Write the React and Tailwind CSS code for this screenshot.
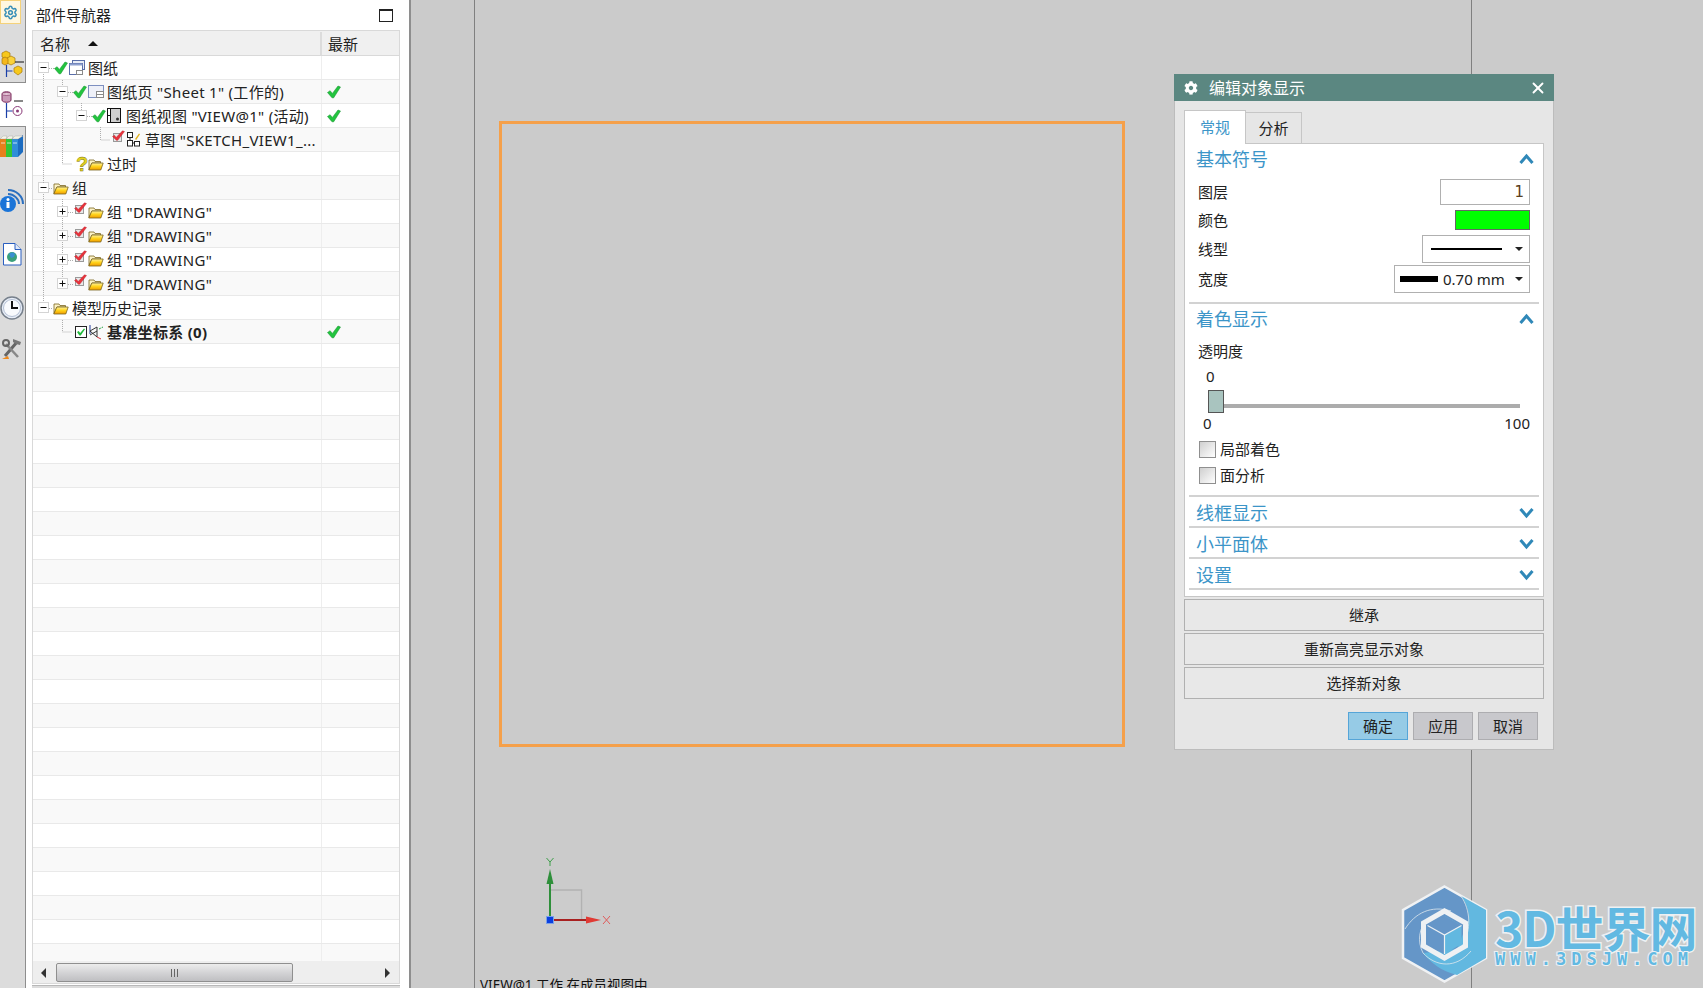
import { FaCog } from 'react-icons/fa';
import { Settings, X } from 'lucide-react';

const Expander = ({ open, tight }) => (
  <svg width="11" height="11" viewBox="0 0 11 11" className={`relative shrink-0 ${tight ? 'mr-[4px]' : 'mr-[6px]'}`}>
    <rect x="0.5" y="0.5" width="10" height="10" fill="#fff" stroke="#d4d4d4" />
    <path d="M2.5 5.5h6" stroke="#111" />
    {!open && <path d="M5.5 2.5v6" stroke="#111" />}
  </svg>
);

const GreenCheck = () => (
  <svg width="14" height="14" viewBox="0 0 14 14" className="-ml-px mr-px shrink-0">
    <path d="M0.500 7.500l2.600-1.800 2.300 2.700L11 1l2.500 1-6.800 10.800H5z" fill="#22c43e" stroke="#0e8f28" strokeWidth="0.5" />
  </svg>
);

const RedCheck = () => (
  <svg width="14" height="14" viewBox="0 0 14 14" className="shrink-0 -mt-[5px]">
    <rect x="1.5" y="3.5" width="8" height="8" fill="#e8e8e8" stroke="#9a9a9a" />
    <path d="M0.5 6.5l2-1.2 1.6 2.2L10.5 0.8l2 .7-6.8 8.8H4.4z" fill="#e8333c" stroke="#b01a24" strokeWidth="0.4" />
  </svg>
);

const Question = () => (
  <span className="w-[14px] shrink-0 pl-[2px] font-['Liberation_Sans',sans-serif] text-[20px] leading-none font-bold text-[#e4d420] [-webkit-text-stroke:0.4px_#77700f]">?</span>
);

const CheckedBox = () => (
  <svg width="14" height="14" viewBox="0 0 14 14" className="shrink-0">
    <rect x="1.5" y="1.5" width="11" height="11" fill="#fff" stroke="#222" />
    <path d="M3 7l1.700-1 1.500 2L10 3.600l1 .6-4.300 6.200H5.400z" fill="#1fbb3a" />
  </svg>
);

const Folder = () => (
  <svg width="16" height="14" viewBox="0 0 16 14" className="mr-[3px] shrink-0">
    <defs>
      <linearGradient id="folderFront" x1="0" y1="0" x2="0" y2="1">
        <stop offset="0" stopColor="#fff3a0" />
        <stop offset="0.5" stopColor="#ffd21a" />
        <stop offset="1" stopColor="#f09a00" />
      </linearGradient>
    </defs>
    <path d="M1 3h5l1 1.500h5.500V6H4L1 12.500z" fill="#fdf3c8" stroke="#7a6420" strokeWidth="0.8" />
    <path d="M3.800 6h11.400l-2.400 7H0.800z" fill="url(#folderFront)" stroke="#7a6420" strokeWidth="0.8" />
  </svg>
);

const SheetsIcon = () => (
  <svg width="16" height="15" viewBox="0 0 16 15" className="mr-[3px] shrink-0">
    <rect x="3.5" y="0.5" width="12" height="9" fill="#e9edf7" stroke="#5a6ea8" />
    <rect x="0.5" y="3.5" width="13" height="11" fill="#fff" stroke="#5a6ea8" />
    <rect x="0.5" y="3.5" width="13" height="2" fill="#8ea0cf" />
    <rect x="7.5" y="10.5" width="6" height="4" fill="#fff" stroke="#8a8a8a" />
  </svg>
);

const SheetIcon = () => (
  <svg width="16" height="13" viewBox="0 0 16 13" className="mr-[3px] shrink-0">
    <rect x="0.5" y="0.5" width="15" height="12" fill="#eef0f8" stroke="#7d8fc0" />
    <rect x="8.5" y="6.5" width="7" height="6" fill="#fff" stroke="#8a8a8a" />
    <path d="M8.5 9.5h7" stroke="#8a8a8a" />
  </svg>
);

const ViewIcon = () => (
  <svg width="15" height="15" viewBox="0 0 15 15" className="mr-[4px] shrink-0">
    <rect x="0.5" y="0.5" width="13" height="14" fill="#cfcfcf" stroke="#111" />
    <rect x="0.5" y="0.5" width="3" height="14" fill="#fff" stroke="#111" />
    <path d="M0.5 7.5h3" stroke="#111" />
    <circle cx="10.5" cy="11" r="1.5" fill="#333" />
  </svg>
);

const SketchIcon = () => (
  <svg width="15" height="15" viewBox="0 0 15 15" className="mr-[4px] shrink-0">
    <rect x="1.5" y="0.5" width="5" height="5" fill="#fff" stroke="#222" />
    <rect x="1.5" y="8.5" width="5" height="5.5" fill="#fff" stroke="#222" />
    <rect x="8.5" y="9.5" width="5" height="4.5" fill="#fff" stroke="#222" />
    <path d="M4 5.5v3M6.5 11h2" stroke="#222" />
    <path d="M9 7l4-5.500 1 .8-3.800 5.600z" fill="#e3b21c" />
  </svg>
);

const CsysIcon = () => (
  <svg width="16" height="16" viewBox="0 0 16 16" className="mr-[3px] shrink-0">
    <path d="M2 1v9" stroke="#223a9a" />
    <path d="M2 7l7 6M2 7l7-4M2 11l7-4M9 3v10" stroke="#333" fill="none" />
    <path d="M9 13l4 2" stroke="#d3303a" />
    <path d="M11 5l4-2" stroke="#22a040" strokeDasharray="2 1" />
  </svg>
);

const treeRows = [
  { pad: 'pl-[5px]', box: 'open', mark: 'green', icon: 'sheets', text: '图纸' },
  { pad: 'pl-[24px]', box: 'open', mark: 'green', icon: 'sheet', text: '图纸页 "Sheet 1" (工作的)', latest: true },
  { pad: 'pl-[43px]', box: 'open', mark: 'green', icon: 'view', text: '图纸视图 "VIEW@1" (活动)', latest: true },
  { pad: 'pl-[62px]', mark: 'red', icon: 'sketch', text: '草图 "SKETCH_VIEW1_...' },
  { pad: 'pl-[24px]', mark: 'question', icon: 'folder', text: '过时' },
  { pad: 'pl-[5px]', box: 'open', tight: true, icon: 'folder', text: '组' },
  { pad: 'pl-[24px]', box: 'closed', mark: 'red', icon: 'folder', text: '组 "DRAWING"' },
  { pad: 'pl-[24px]', box: 'closed', mark: 'red', icon: 'folder', text: '组 "DRAWING"' },
  { pad: 'pl-[24px]', box: 'closed', mark: 'red', icon: 'folder', text: '组 "DRAWING"' },
  { pad: 'pl-[24px]', box: 'closed', mark: 'red', icon: 'folder', text: '组 "DRAWING"' },
  { pad: 'pl-[5px]', box: 'open', tight: true, icon: 'folder', text: '模型历史记录' },
  { pad: 'pl-[24px]', mark: 'box', icon: 'csys', text: '基准坐标系 (0)', latest: true, bold: true },
];

const marks = { green: GreenCheck, red: RedCheck, question: Question, box: CheckedBox };
const icons = { sheets: SheetsIcon, sheet: SheetIcon, view: ViewIcon, sketch: SketchIcon, folder: Folder, csys: CsysIcon };

const TreeRow = ({ row, index }) => {
  const Mark = row.mark && marks[row.mark];
  const Icon = icons[row.icon];
  const hasLatin = /[A-Za-z0-9]/.test(row.text);
  return (
    <div className={`flex h-[24px] shrink-0 border-b border-[#e9e9e9] ${index % 2 ? 'bg-[#f9f9f9]' : 'bg-white'}`}>
      <div className={`flex w-[289px] items-center overflow-hidden whitespace-nowrap border-r border-[#eeeeee] ${row.pad}`}>
        {row.box ? <Expander open={row.box === 'open'} tight={row.tight} /> : <span className="mr-[6px] w-[11px] shrink-0" />}
        {Mark && <Mark />}
        <Icon />
        <span className={`${row.bold ? 'font-bold' : ''} ${hasLatin ? 'tracking-[0.3px]' : ''}`}>{row.text}</span>
      </div>
      <div className="flex flex-1 items-center pl-[6px]">{row.latest && <GreenCheck />}</div>
    </div>
  );
};

const TreeLines = () => (
  <svg width="120" height="300" className="pointer-events-none absolute top-0 left-0" fill="none" stroke="#aeaeae" strokeDasharray="1 1">
    <path d="M10.500 18V127M10.500 138V246" />
    <path d="M29.500 24V30M29.500 42V108H39" />
    <path d="M29.500 143V150M29.500 162V174M29.500 186V198M29.500 210V222" />
    <path d="M48.500 47V54" />
    <path d="M67.500 71V84H77" />
    <path d="M29.500 264V276H39" />
    <path d="M16 12.500H22M35 36.500H41M54 60.500H60" />
    <path d="M16 132.500H20M16 252.500H20" />
    <path d="M35 156.500H41M35 180.500H41M35 204.500H41M35 228.500H41" />
  </svg>
);

const RailCubes = () => (
  <svg width="24" height="28" viewBox="0 0 24 28">
    <path d="M5 1l4 2v4l-4 2-4-2V3z" fill="#f7c81c" stroke="#a8780a" strokeWidth="0.7" />
    <path d="M10 6l4 2v5l-4 2-4-2V8z" fill="#fad23a" stroke="#a8780a" strokeWidth="0.7" />
    <path d="M4 7l3 1.500v5L4 15l-3-1.500v-5z" fill="#f5b81c" stroke="#a8780a" strokeWidth="0.7" />
    <path d="M14 12h9" stroke="#111" />
    <path d="M5.500 15v12M5.500 21h6" stroke="#1a3fa8" strokeWidth="1.200" />
    <path d="M17 16l4 2v4l-4 3-4-3v-4z" fill="#f7c81c" stroke="#a8780a" strokeWidth="0.7" />
  </svg>
);

const RailDatabase = () => (
  <svg width="24" height="28" viewBox="0 0 24 28">
    <path d="M1 3c0-3 9-3 9 0v6c0 3-9 3-9 0z" fill="#c99ab8" stroke="#7a2a5a" />
    <ellipse cx="5.500" cy="3" rx="4.500" ry="1.500" fill="#e5c6d8" stroke="#7a2a5a" strokeWidth="0.6" />
    <path d="M13 10h9" stroke="#111" />
    <path d="M5.500 12v15M5.500 20h6" stroke="#1a3fa8" strokeWidth="1.200" />
    <circle cx="16.500" cy="20" r="4.500" fill="#fff" stroke="#8a3a78" />
    <circle cx="16.500" cy="20" r="1.500" fill="#8a3a78" />
  </svg>
);

const RailBooks = () => (
  <svg width="24" height="24" viewBox="0 0 24 24">
    <path d="M0 5h6v18H0z" fill="#e8801c" />
    <path d="M6 5h6v18H6z" fill="#35c635" />
    <path d="M12 5h6v18h-6z" fill="#2f8ed8" />
    <path d="M18 5l5-4v17l-5 5z" fill="#1c6cc0" />
    <path d="M0 5l3-3h4L6 5zM6 5l3-3h4l-1 3zM12 5l3-3h8l-5 3z" fill="#f4f4e8" stroke="#888" strokeWidth="0.3" />
    <path d="M1 9h4M7 9h4M13 9h4" stroke="#fff" strokeOpacity="0.7" />
  </svg>
);

const RailInfo = () => (
  <svg width="25" height="25" viewBox="0 0 25 25">
    <path d="M8 2c8 0 15 6 15 14" fill="none" stroke="#2a6fc0" strokeWidth="2" />
    <path d="M8 6c6 0 11 5 11 10" fill="none" stroke="#2a6fc0" strokeWidth="2" />
    <circle cx="8" cy="16" r="8" fill="#1a74d8" />
    <rect x="6.500" y="14" width="3" height="6" fill="#fff" />
    <circle cx="8" cy="11.500" r="1.500" fill="#fff" />
  </svg>
);

const RailDoc = () => (
  <svg width="19" height="23" viewBox="0 0 19 23">
    <path d="M0.500 0.500H12l6 6v15.500H0.500z" fill="#fff" stroke="#2a5fc0" />
    <path d="M12 0.500v6h6" fill="#dfe8f8" stroke="#2a5fc0" />
    <circle cx="9" cy="14" r="5" fill="#3aa07a" />
    <path d="M6 11c2-2 5-2 6 0l-1 3-3 1z" fill="#3a8fd0" />
  </svg>
);

const RailClock = () => (
  <svg width="24" height="24" viewBox="0 0 24 24">
    <circle cx="12" cy="12" r="11" fill="#e8eef8" stroke="#77808c" strokeWidth="1.500" />
    <circle cx="12" cy="12" r="8.500" fill="#f8fafd" stroke="#b4c0d4" />
    <path d="M12 5v7h6" fill="none" stroke="#111" strokeWidth="2" />
  </svg>
);

const RailTools = () => (
  <svg width="22" height="24" viewBox="0 0 22 24">
    <path d="M4 19L16 5" stroke="#666" strokeWidth="3" />
    <path d="M12 2l8 3-1 3-4-1-3-2z" fill="#777" />
    <path d="M5 7l12 13" stroke="#888" strokeWidth="2.500" />
    <circle cx="5" cy="6" r="3" fill="none" stroke="#666" strokeWidth="2" />
    <path d="M1 22l6-3 1 3z" fill="#f08a1c" />
  </svg>
);

const LeftRail = () => (
  <div className="flex w-[26px] shrink-0 flex-col border-r border-[#8e8e8e] bg-[#dcdcdc]">
    <div className="flex h-[24px] w-[21px] items-center justify-center border border-[#f5d27a] bg-[#fff7e0]">
      <Settings className="h-[15px] w-[15px] text-[#3a8fb8]" strokeWidth={2.400} />
    </div>
    <div className="flex h-[58px] items-end pb-[4px] pl-px">
      <RailCubes />
    </div>
    <div className="-mr-px flex h-[45px] items-center border-y border-[#8e8e8e] bg-white pl-px">
      <RailDatabase />
    </div>
    <div className="flex h-[40px] items-center pb-[2px]">
      <RailBooks />
    </div>
    <div className="flex h-[66px] shrink-0 items-center">
      <RailInfo />
    </div>
    <div className="flex h-[42px] items-center pl-[3px]">
      <RailDoc />
    </div>
    <div className="flex h-[62px] items-center pt-[4px]">
      <RailClock />
    </div>
    <div className="flex h-[24px] items-center pl-px">
      <RailTools />
    </div>
  </div>
);

const PartNavigator = () => (
  <div className="flex w-[385px] shrink-0 flex-col border-r-2 border-[#8e8e8e] bg-white text-[15px] leading-[20px] text-[#222]">
    <div className="flex h-[30px] shrink-0 items-center justify-between pr-[16px] pl-[10px]">
      <span>部件导航器</span>
      <span className="h-[13px] w-[14px] border border-t-2 border-[#222]" />
    </div>
    <div className="mr-[9px] ml-[6px] flex h-[954px] shrink-0 flex-col border border-[#d9d9d9]">
      <div className="flex h-[25px] shrink-0 border-b border-[#d9d9d9] bg-[#f0f0f0] pt-px">
        <div className="flex w-[289px] items-center border-r-2 border-[#dcdcdc] pl-[7px]">
          <span>名称</span>
          <span className="ml-[18px] h-0 w-0 border-x-[5px] border-b-[5px] border-x-transparent border-b-[#111]" />
        </div>
        <div className="flex flex-1 items-center pl-[6px]">最新</div>
      </div>
      <div className="relative flex h-[905px] shrink-0 flex-col overflow-hidden">
        {treeRows.map((row, i) => (
          <TreeRow key={i} row={row} index={i} />
        ))}
        {Array.from({ length: 27 }).map((_, i) => (
          <div key={i} className={`flex h-[24px] shrink-0 border-b border-[#e9e9e9] ${i % 2 ? 'bg-[#f9f9f9]' : 'bg-white'}`}>
            <div className="w-[289px] border-r border-[#eeeeee]" />
          </div>
        ))}
        <TreeLines />
      </div>
      <div className="flex h-[22px] shrink-0 items-center bg-[#eeeeee] pt-px">
        <span className="ml-[8px] h-0 w-0 border-y-[5px] border-r-[5px] border-y-transparent border-r-[#333]" />
        <div className="relative ml-[10px] flex h-[19px] w-[237px] items-center justify-center rounded-[2px] border border-[#8f8f8f] bg-gradient-to-b from-[#ececec] via-[#d4d4d6] to-[#bfbfc2]">
          <span className="h-[8px] w-[7px] border-x border-[#666] after:mx-auto after:block after:h-[8px] after:w-px after:bg-[#666]" />
        </div>
        <span className="mr-[9px] ml-auto h-0 w-0 border-y-[5px] border-l-[5px] border-y-transparent border-l-[#333]" />
      </div>
    </div>
    <div className="mt-auto mr-[9px] ml-[6px] h-[3px] border-t border-[#b8b8b8] bg-[#dcdcdc]" />
  </div>
);

const Chevron = ({ up }) => (
  <svg width="15" height="12" viewBox="0 0 15 12" fill="none" stroke="#2f88b8" strokeWidth="3">
    <path d={up ? 'M1.500 10L7.500 3l6 7' : 'M1.500 2l6 7 6-7'} />
  </svg>
);

const SectionHeader = ({ title, up }) => (
  <div className="flex items-center justify-between pr-[9px] pl-[11px] text-[18px] text-[#3c95c8]">
    <span>{title}</span>
    <Chevron up={up} />
  </div>
);

const Caret = () => <span className="ml-auto h-0 w-0 border-x-[4px] border-t-[4px] border-x-transparent border-t-[#222]" />;

const FieldRow = ({ label, className, children }) => (
  <div className={`flex items-center justify-between pr-[13px] pl-[13px] ${className}`}>
    <span>{label}</span>
    {children}
  </div>
);

const Tick = ({ label, className }) => (
  <div className={`flex items-center pl-[14px] ${className}`}>
    <span className="mr-[4px] h-[17px] w-[17px] border border-[#8f8f8f] bg-gradient-to-br from-[#cfcfcf] to-white" />
    {label}
  </div>
);

const WideButton = ({ children }) => (
  <div className="flex h-[32px] items-center justify-center border border-[#b0b0b0] bg-[#e8e8e8] text-[15px]">{children}</div>
);

const EditDisplayDialog = () => (
  <div className="absolute top-[74px] left-[763px] flex h-[676px] w-[380px] flex-col border-x border-b border-[#bcbcbc] bg-[#e6e6e6] text-[15px] leading-[20px] text-[#222]">
    <div className="-mx-px flex h-[27px] shrink-0 items-center bg-[#5b8781] pr-[7px] pl-[10px] text-white">
      <FaCog className="text-[14px]" />
      <span className="ml-[11px] text-[16px]">编辑对象显示</span>
      <X className="ml-auto h-[18px] w-[18px]" strokeWidth={2.500} />
    </div>
    <div className="mt-[8px] flex h-[34px] shrink-0 items-end px-[9px]">
      <div className="z-10 -mb-px flex h-[34px] w-[62px] items-center justify-center border-x border-t border-[#c6c6c6] bg-white pb-px text-[#3c95c8]">常规</div>
      <div className="flex h-[31px] w-[56px] items-center justify-center border-t border-r border-[#c6c6c6] pb-px">分析</div>
    </div>
    <div className="mx-[9px] flex h-[454px] shrink-0 flex-col border border-[#c6c6c6] bg-white">
      <div className="pt-[5px]">
        <SectionHeader title="基本符号" up />
      </div>
      <FieldRow label="图层" className="mt-[10px] h-[25px]">
        <span className="flex h-[26px] w-[90px] items-center justify-end border border-[#b0b0b0] pr-[5px] font-['DejaVu_Sans',sans-serif] text-[#5a4020]">1</span>
      </FieldRow>
      <FieldRow label="颜色" className="mt-[5px] h-[21px]">
        <span className="h-[20px] w-[75px] border border-[#666] bg-[#00ff00]" />
      </FieldRow>
      <FieldRow label="线型" className="mt-[5px] h-[28px]">
        <span className="flex h-[28px] w-[108px] items-center border border-[#b0b0b0] pr-[6px] pl-[8px]">
          <span className="h-[2px] w-[71px] bg-black" />
          <Caret />
        </span>
      </FieldRow>
      <FieldRow label="宽度" className="mt-[2px] h-[28px]">
        <span className="flex h-[28px] w-[136px] items-center border border-[#b0b0b0] pr-[6px] pl-[5px]">
          <span className="h-[6px] w-[38px] bg-black" />
          <span className="ml-[5px] whitespace-nowrap">0.70 mm</span>
          <Caret />
        </span>
      </FieldRow>
      <div className="mx-[4px] mt-[9px] border-t-2 border-[#d2d2d2]" />
      <div className="pt-[5px]">
        <SectionHeader title="着色显示" up />
      </div>
      <div className="mt-[12px] pl-[13px]">透明度</div>
      <div className="mt-[5px] pl-[21px]">0</div>
      <div className="relative mt-[4px] ml-[23px] flex h-[23px] w-[312px] items-end pb-[5px]">
        <span className="h-[4px] w-full bg-[#acacac]" />
        <span className="absolute top-0 left-0 h-[23px] w-[16px] border border-[#555] bg-[#a9c4bf]" />
      </div>
      <div className="flex justify-between pr-[13px] pl-[18px]">
        <span>0</span>
        <span>100</span>
      </div>
      <Tick label="局部着色" className="mt-[6px] h-[20px]" />
      <Tick label="面分析" className="mt-[6px] h-[20px]" />
      <div className="mx-[4px] mt-[10px] border-t-2 border-[#d2d2d2]" />
      <div className="flex h-[29px] flex-col justify-center pt-[2px]">
        <SectionHeader title="线框显示" />
      </div>
      <div className="mx-[4px] border-t-2 border-[#d2d2d2]" />
      <div className="flex h-[29px] flex-col justify-center pt-[2px]">
        <SectionHeader title="小平面体" />
      </div>
      <div className="mx-[4px] border-t-2 border-[#d2d2d2]" />
      <div className="flex h-[29px] flex-col justify-center pt-[2px]">
        <SectionHeader title="设置" />
      </div>
      <div className="mx-[4px] border-t-2 border-[#d2d2d2]" />
    </div>
    <div className="mx-[9px] mt-[2px] flex flex-col gap-[2px]">
      <WideButton>继承</WideButton>
      <WideButton>重新高亮显示对象</WideButton>
      <WideButton>选择新对象</WideButton>
    </div>
    <div className="mt-[13px] flex justify-end gap-[5px] pr-[15px]">
      <span className="flex h-[28px] w-[60px] items-center justify-center border border-[#55a5d8] bg-[#96cbe6]">确定</span>
      <span className="flex h-[28px] w-[60px] items-center justify-center border border-[#adadb0] bg-[#c8c8cc]">应用</span>
      <span className="flex h-[28px] w-[60px] items-center justify-center border border-[#adadb0] bg-[#c8c8cc]">取消</span>
    </div>
  </div>
);

const Axes = () => (
  <svg width="72" height="75" viewBox="0 0 72 75" className="absolute top-[857px] left-[131px]">
    <path d="M8.500 33h31v30" fill="none" stroke="#b2b2b2" strokeWidth="1.500" />
    <rect x="8" y="34" width="31" height="29" fill="#d2d2d2" fillOpacity="0.3" />
    <path d="M8 63V24" stroke="#2e8f3a" strokeWidth="2" />
    <path d="M8 12l3.500 15h-7z" fill="#2e8f3a" />
    <path d="M4.500 1l3.500 4 3.500-4M8 5v4" fill="none" stroke="#3e9f4a" />
    <path d="M8 63h38" stroke="#a82020" strokeWidth="2" />
    <path d="M59 63l-15 3.500v-7z" fill="#e03a34" />
    <path d="M61 59l7 8M68 59l-7 8" stroke="#e05a5a" />
    <rect x="4.500" y="59.500" width="7" height="7" fill="#0a3fe0" stroke="#7aa0e8" />
  </svg>
);

const Watermark = () => (
  <div className="absolute top-[885px] left-[990px] flex h-[98px] w-[305px] items-start">
    <svg width="87" height="98" viewBox="0 0 87 98" className="shrink-0">
      <path d="M43.500 1.500L85 25v48L43.500 96.500 2 73V25z" fill="#6596c8" stroke="#f0f2f4" strokeWidth="2.500" />
      <path d="M60 11l25 14v48L56 90C40 86 30 78 22 68l34-4 12-30C68 24 65 18 60 11z" fill="#62b8e0" />
      <path d="M22 68C35 82 55 84 70 66M60 11C70 26 70 44 62 60M4 44C14 28 30 20 50 26M22 68C16 56 18 44 26 34" fill="none" stroke="#dfe8ee" strokeWidth="0.800" />
      <path d="M43.500 26l21 12v23l-21 12-21-12V38z" fill="none" stroke="#eef1f3" strokeWidth="5" />
      <path d="M43.500 31l17 9.500v18.500l-17 10z" fill="#62b8e0" />
      <path d="M43.500 31l17 9.500-17 9.500-17-9.500z" fill="#6596c8" />
      <path d="M26.500 40.500l17 9.500v19.500l-17-10z" fill="#6596c8" />
      <path d="M26.500 40.500l17 9.500 17-9.500M43.500 50v19" fill="none" stroke="#eef1f3" strokeWidth="1.200" />
    </svg>
    <div className="ml-[7px] flex flex-col items-start font-['Noto_Sans_CJK_SC',sans-serif] font-bold whitespace-nowrap text-[#62b9e2] [paint-order:stroke_fill] [-webkit-text-stroke:3px_#eef1f3]">
      <span className="mt-[15px] text-[48px] leading-[52px] tracking-[-1px]">3D世界网</span>
      <span className="font-['DejaVu_Sans_Mono',monospace] text-[17px] leading-[15px] tracking-[5px] [-webkit-text-stroke:2px_#eef1f3]">WWW.3DSJW.COM</span>
    </div>
  </div>
);

const DrawingCanvas = () => (
  <div className="relative flex-1 overflow-hidden bg-[#cbcbcb]">
    <div className="absolute top-0 left-[63px] h-full w-px bg-[#808080]" />
    <div className="absolute top-0 left-[1060px] h-full w-px bg-[#808080]" />
    <div className="absolute top-[121px] left-[88px] h-[626px] w-[626px] border-[3px] border-[#f5a04a]" />
    <Axes />
    <span className="absolute top-[975px] left-[69px] text-[13.5px] leading-[20px] whitespace-nowrap text-[#111]">VIEW@1 工作 在成员视图中</span>
    <Watermark />
    <EditDisplayDialog />
  </div>
);

const App = () => (
  <div className="flex h-[988px] w-[1703px] overflow-hidden font-['Noto_Sans','Noto_Sans_CJK_SC',sans-serif]">
    <LeftRail />
    <PartNavigator />
    <DrawingCanvas />
  </div>
);

export default App;
